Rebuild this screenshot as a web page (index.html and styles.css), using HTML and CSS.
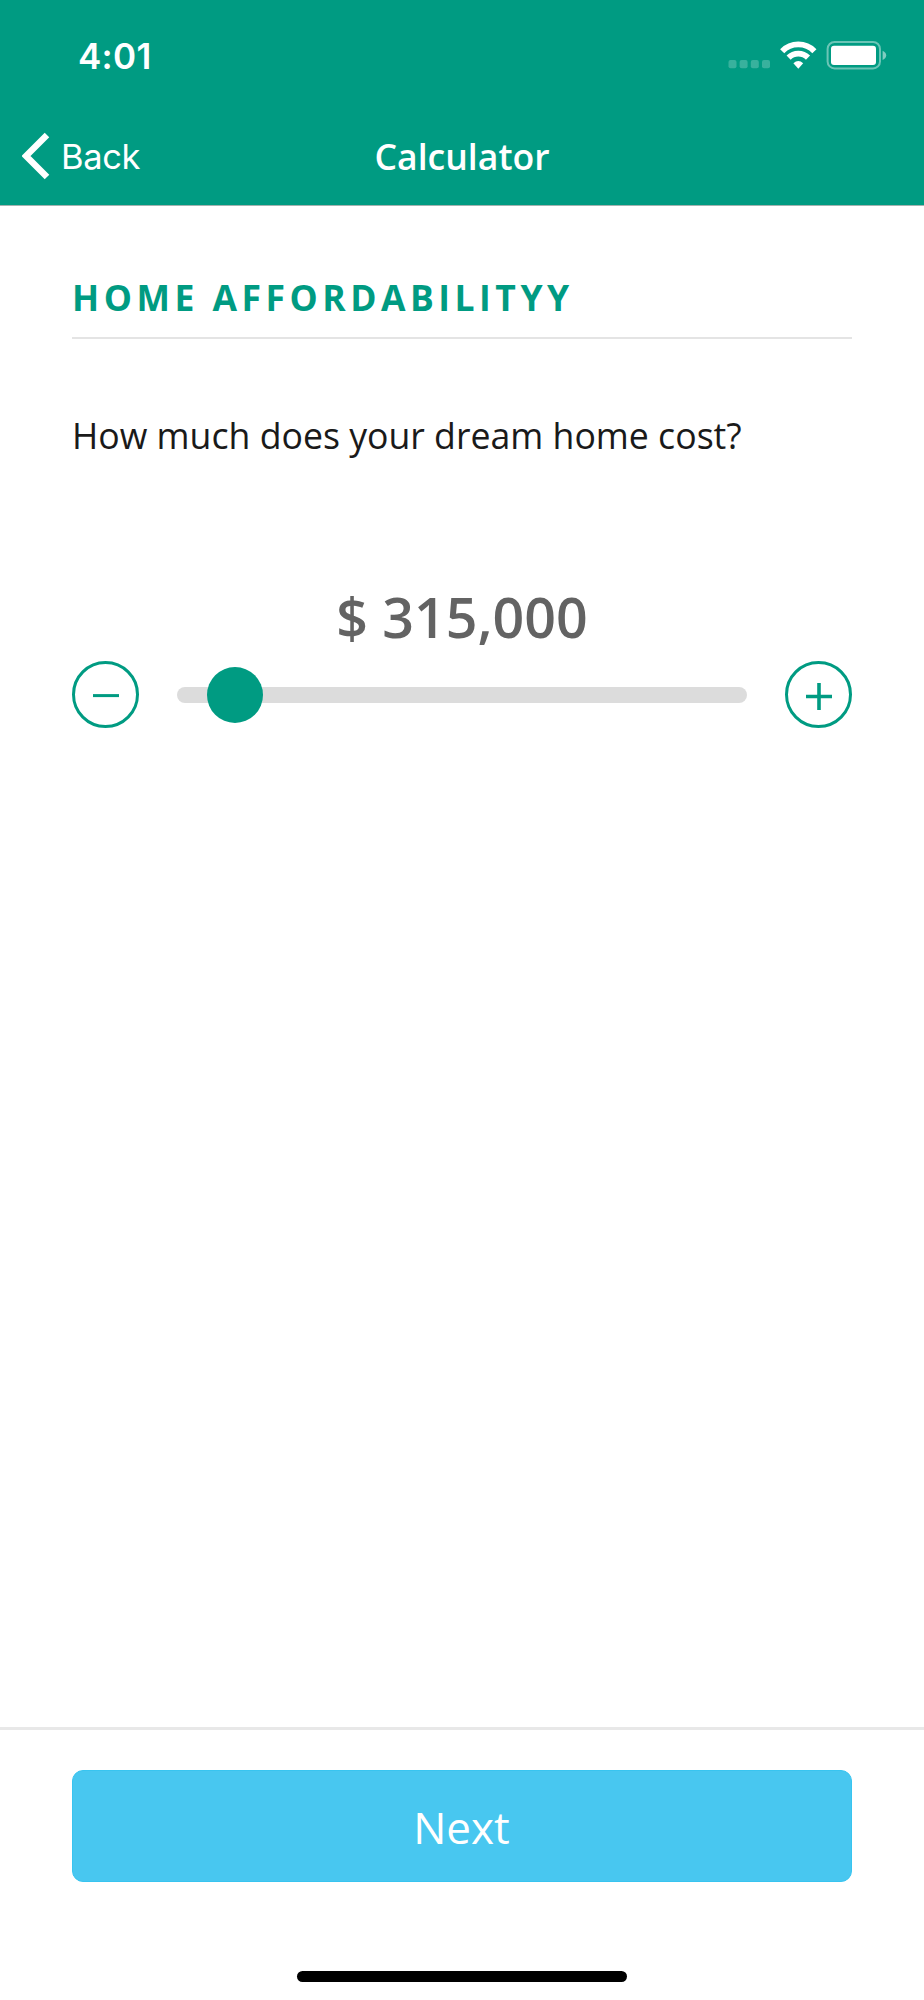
FILE: index.html
```
<!DOCTYPE html>
<html lang="en">

<head>
  <meta charset="UTF-8">
  <title>Calculator</title>
  <link rel="stylesheet" href="styles.css">
</head>

<body>
  <header class="header">
    <div class="status-bar">
      <span class="time">4:01</span>
      <svg class="status-icons" width="160" height="30" viewBox="0 0 160 30">
        <!-- signal -->
        <g fill="#fff" fill-opacity="0.22">
          <rect x="1.5" y="20" width="8" height="8.3" rx="2" />
          <rect x="12.6" y="20" width="8" height="8.3" rx="2" />
          <rect x="23.8" y="20" width="8" height="8.3" rx="2" />
          <rect x="35" y="20" width="8" height="8.3" rx="2" />
        </g>
        <!-- wifi -->
        <g fill="none" stroke="#fff" stroke-width="5.8">
          <path d="M55.2 11.2 A22.5 22.5 0 0 1 87.4 11.2" />
          <path d="M61.6 17.6 A13.7 13.7 0 0 1 81 17.6" />
        </g>
        <path fill="#fff" d="M71.3 28.8 L66.4 23.2 Q71.3 18.8 76.2 23.2 Z" />
        <!-- battery -->
        <rect x="100.6" y="2" width="52.4" height="26.4" rx="7" fill="none" stroke="#fff" stroke-opacity="0.42" stroke-width="2" />
        <rect x="104" y="5.7" width="45" height="19.3" rx="3" fill="#fff" />
        <path d="M155.6 10.7 Q159.2 12.4 159.2 15.3 Q159.2 18.2 155.6 20 Z" fill="#fff" fill-opacity="0.5" />
      </svg>
    </div>
    <div class="nav-bar">
      <a class="back" href="#">
        <svg width="28" height="48" viewBox="0 0 28 48">
          <path d="M25 3 L4 24 L25 45" fill="none" stroke="#fff" stroke-width="6.4" />
        </svg>
        <span>Back</span>
      </a>
      <h1 class="title">Calculator</h1>
    </div>
  </header>

  <main class="content">
    <h2 class="section-title">HOME AFFORDABILITYY</h2>
    <p class="question">How much does your dream home cost?</p>
    <div class="amount">$ 315,000</div>
    <div class="slider-row">
      <button class="round-btn" aria-label="Decrease">
        <svg width="26" height="28" viewBox="0 0 26 28">
          <path d="M0 14.6 H26" stroke="#009b82" stroke-width="3" />
        </svg>
      </button>
      <div class="track">
        <div class="thumb"></div>
      </div>
      <button class="round-btn" aria-label="Increase">
        <svg width="26" height="28" viewBox="0 0 26 28">
          <path d="M0 15.5 H26 M13 2 V29" stroke="#009b82" stroke-width="3.6" />
        </svg>
      </button>
    </div>
  </main>

  <footer class="footer">
    <button class="next-btn">Next</button>
    <div class="home-indicator"></div>
  </footer>
</body>

</html>
```
FILE: styles.css
```
* {
  box-sizing: border-box;
}

body {
  margin: 0;
  height: 2000px;
  display: flex;
  flex-direction: column;
  font-family: "Open Sans", "Noto Sans", sans-serif;
  background-color: #fff;
  overflow: hidden;
}

.header {
  height: 206px;
  background-color: #009b82;
  border-bottom: 1px solid #a3b3b0;
  color: #fff;
}

.status-bar {
  height: 108px;
  display: flex;
  justify-content: space-between;
  padding: 34px 37px 0 78px;
}

.time {
  font-family: Inter, sans-serif;
  font-size: 35px;
  font-weight: 600;
  line-height: 44px;
  letter-spacing: 0.3px;
}

.status-icons {
  margin-top: 6px;
}

.nav-bar {
  height: 96px;
  display: grid;
  grid-template-columns: 1fr auto 1fr;
  align-items: center;
}

.back {
  display: flex;
  align-items: center;
  gap: 11px;
  padding-left: 22px;
  color: #fff;
  font-family: Inter, sans-serif;
  font-size: 34.5px;
  letter-spacing: -0.4px;
  text-decoration: none;
}

.title {
  margin: 0;
  font-size: 35.6px;
  font-weight: 600;
}

.content {
  flex: 1;
  padding: 66px 72px 0;
}

.section-title {
  margin: 0;
  height: 67px;
  border-bottom: 2px solid #e4e4e4;
  color: #009b82;
  font-size: 35.5px;
  font-weight: 700;
  line-height: 50px;
  letter-spacing: 4.5px;
  white-space: nowrap;
}

.question {
  margin: 71px 0 0;
  color: #1a1a1a;
  font-size: 35.65px;
  line-height: 50px;
  white-space: nowrap;
}

.amount {
  margin-top: 119px;
  color: #636363;
  font-size: 55.5px;
  font-weight: 600;
  line-height: 76px;
  text-align: center;
}

.slider-row {
  display: flex;
  align-items: center;
  gap: 38px;
  margin-top: 6px;
}

.round-btn {
  width: 67px;
  height: 67px;
  flex: none;
  display: flex;
  align-items: center;
  justify-content: center;
  padding: 0;
  border: 3px solid #009b82;
  border-radius: 50%;
  background-color: #fff;
}

.round-btn svg {
  overflow: visible;
}

.track {
  flex: 1;
  height: 16px;
  display: flex;
  align-items: center;
  padding-left: 30px;
  border-radius: 8px;
  background-color: #dcdcdc;
}

.thumb {
  width: 56px;
  height: 56px;
  flex: none;
  border-radius: 50%;
  background-color: #009b82;
}

.footer {
  height: 273px;
  padding: 40px 72px 0;
  border-top: 3px solid #e8e8e8;
}

.next-btn {
  width: 100%;
  height: 112px;
  display: block;
  padding: 1px 1px 0 0;
  border: 1px solid #38c4f0;
  border-radius: 11px;
  background-color: #48c7f0;
  color: #fff;
  font-family: inherit;
  font-size: 44px;
}

.home-indicator {
  width: 330px;
  height: 11px;
  margin: 89px auto 0;
  border-radius: 6px;
  background-color: #000;
}
```
